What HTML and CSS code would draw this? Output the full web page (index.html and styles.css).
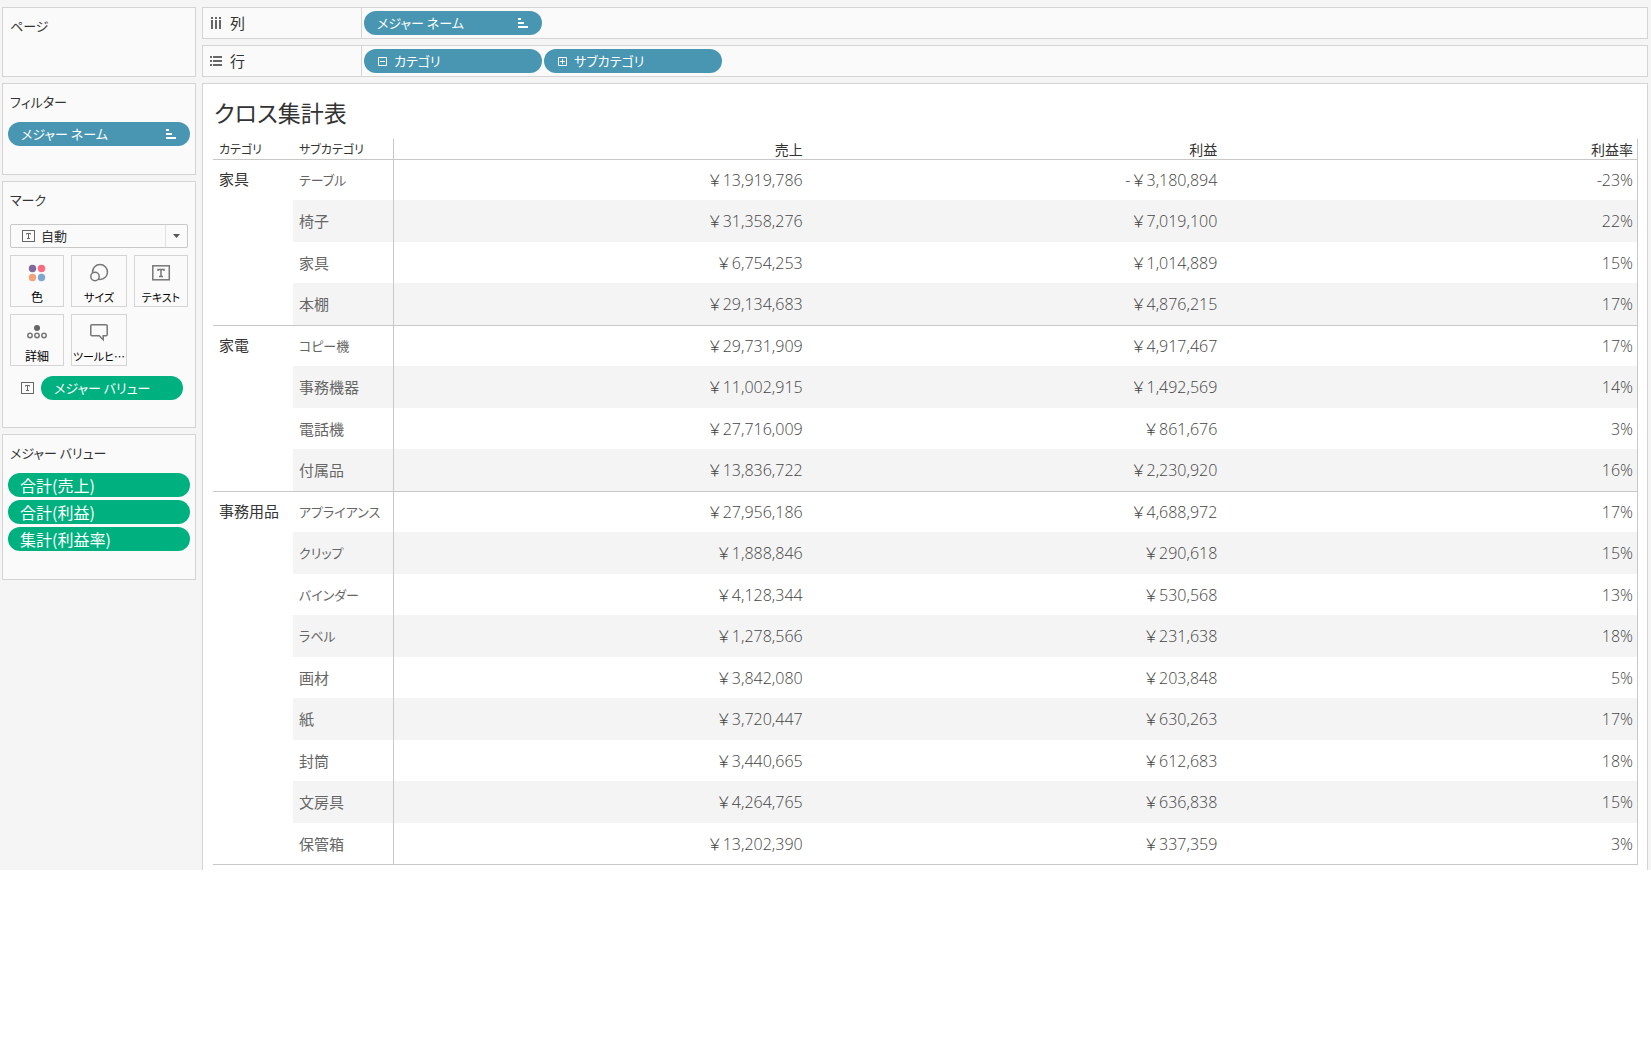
FILE: index.html
```html
<!DOCTYPE html>
<html lang="ja">
<head>
<meta charset="utf-8">
<meta name="viewport" content="width=device-width, initial-scale=1">
<title>クロス集計表</title>
<link rel="stylesheet" href="styles.css">
</head>
<body>
<div class="app">
  <aside class="sidebar">
    <section class="card card-pages">
      <h2 class="card-title">ページ</h2>
    </section>
    <section class="card card-filters">
      <h2 class="card-title">フィルター</h2>
      <button class="pill pill-dim" type="button">メジャー ネーム
        <svg class="sort-icon" width="10" height="10" viewBox="0 0 10 10"><path d="M0 0h3v2H0zM0 4h6v2H0zM0 8h10v2H0z"/></svg>
      </button>
    </section>
    <section class="card card-marks">
      <h2 class="card-title">マーク</h2>
      <div class="mark-type">
        <svg class="text-icon mark-type-icon" width="14" height="13" viewBox="0 0 14 13"><rect x=".5" y=".5" width="12" height="11"/><path d="M4.500 4.500v-1h4v1M6.500 3.500v5M5 8.500h3"/></svg>
        <select class="mark-select" aria-label="マークの種類"><option>自動</option></select>
        <svg class="mark-arrow" width="7" height="4" viewBox="0 0 7 4"><path d="M0 0h7L3.500 4z"/></svg>
      </div>
      <div class="mark-grid">
        <button class="mark-btn" type="button">
          <svg width="20" height="20" viewBox="0 0 20 20"><circle cx="5.500" cy="5.500" r="3.700" fill="#80699b"/><circle cx="14.500" cy="5.500" r="3.700" fill="#fb6a7f"/><circle cx="5.500" cy="14.500" r="3.700" fill="#f2a37a"/><circle cx="14.500" cy="14.500" r="3.700" fill="#80a5cf"/></svg>
          <span>色</span>
        </button>
        <button class="mark-btn" type="button">
          <svg class="line-icon" width="20" height="20" viewBox="0 0 20 20"><circle cx="11" cy="9" r="7.500"/><circle class="cover" cx="6" cy="13.500" r="4.200"/></svg>
          <span class="kana">サイズ</span>
        </button>
        <button class="mark-btn" type="button">
          <svg class="line-icon" width="20" height="20" viewBox="0 0 20 20"><rect x="1.800" y="2.800" width="16.500" height="14"/><path d="M7 8V6.500h6V8M10 6.500v7M8 13.500h4"/></svg>
          <span class="kana">テキスト</span>
        </button>
        <button class="mark-btn" type="button">
          <svg class="line-icon" width="20" height="20" viewBox="0 0 20 20"><circle class="solid" cx="10" cy="6" r="3"/><circle cx="3" cy="13.500" r="2.200"/><circle cx="10" cy="13.500" r="2.200"/><circle cx="17" cy="13.500" r="2.200"/></svg>
          <span>詳細</span>
        </button>
        <button class="mark-btn" type="button">
          <svg class="line-icon" width="20" height="20" viewBox="0 0 20 20"><path d="M3 2.800h14q1.200 0 1.200 1v9q0 1-1 1h-3v4l-4-4H3q-1.200 0-1.200-1v-9q0-1 1.200-1z"/></svg>
          <span class="kana">ツールヒ…</span>
        </button>
      </div>
      <div class="mark-field">
        <svg class="text-icon" width="14" height="13" viewBox="0 0 14 13"><rect x=".5" y=".5" width="12" height="11"/><path d="M4.500 4.500v-1h4v1M6.500 3.500v5M5 8.500h3"/></svg>
        <button class="pill pill-measure" type="button">メジャー バリュー</button>
      </div>
    </section>
    <section class="card card-values">
      <h2 class="card-title">メジャー バリュー</h2>
      <div class="pill-stack">
        <button class="pill pill-measure pill-calc" type="button">合計(売上)</button>
        <button class="pill pill-measure pill-calc" type="button">合計(利益)</button>
        <button class="pill pill-measure pill-calc" type="button">集計(利益率)</button>
      </div>
    </section>
  </aside>

  <main class="workspace">
    <section class="shelf">
      <h2 class="shelf-title">
        <svg width="12" height="12" viewBox="0 0 12 12"><path d="M1 0h2v2H1zM5 0h2v2H5zM9 0h2v2H9zM1 3h2v9H1zM5 3h2v9H5zM9 3h2v9H9z"/></svg>列
      </h2>
      <div class="shelf-pills">
        <button class="pill pill-dim" type="button">メジャー ネーム
          <svg class="sort-icon" width="10" height="10" viewBox="0 0 10 10"><path d="M0 0h3v2H0zM0 4h6v2H0zM0 8h10v2H0z"/></svg>
        </button>
      </div>
    </section>
    <section class="shelf">
      <h2 class="shelf-title">
        <svg width="12" height="12" viewBox="0 0 12 12"><path d="M0 1h2v2H0zM0 5h2v2H0zM0 9h2v2H0zM3 1h9v2H3zM3 5h9v2H3zM3 9h9v2H3z"/></svg>行
      </h2>
      <div class="shelf-pills">
        <button class="pill pill-dim" type="button"><svg class="box-icon" width="9" height="9" viewBox="0 0 9 9"><path d="M.5.5h8v8h-8zM2 4.500h5"/></svg>カテゴリ</button>
        <button class="pill pill-dim" type="button"><svg class="box-icon" width="9" height="9" viewBox="0 0 9 9"><path d="M.5.5h8v8h-8zM2 4.500h5M4.500 2v5"/></svg>サブカテゴリ</button>
      </div>
    </section>
    <section class="sheet">
      <h1 class="sheet-title">クロス集計表</h1>
      <table class="crosstab">
        <colgroup><col class="col-cat"><col class="col-sub"><col><col><col></colgroup>
        <thead>
          <tr><th class="kana" scope="col">カテゴリ</th><th class="sub kana" scope="col">サブカテゴリ</th><th class="num" scope="col">売上</th><th class="num" scope="col">利益</th><th class="num" scope="col">利益率</th></tr>
        </thead>
        <tbody>
          <tr><th class="cat" scope="rowgroup" rowspan="4">家具</th><th class="sub kana" scope="row">テーブル</th><td>￥13,919,786</td><td>-￥3,180,894</td><td>-23%</td></tr>
          <tr><th class="sub" scope="row">椅子</th><td>￥31,358,276</td><td>￥7,019,100</td><td>22%</td></tr>
          <tr><th class="sub" scope="row">家具</th><td>￥6,754,253</td><td>￥1,014,889</td><td>15%</td></tr>
          <tr><th class="sub" scope="row">本棚</th><td>￥29,134,683</td><td>￥4,876,215</td><td>17%</td></tr>
        </tbody>
        <tbody>
          <tr><th class="cat" scope="rowgroup" rowspan="4">家電</th><th class="sub kana" scope="row">コピー機</th><td>￥29,731,909</td><td>￥4,917,467</td><td>17%</td></tr>
          <tr><th class="sub" scope="row">事務機器</th><td>￥11,002,915</td><td>￥1,492,569</td><td>14%</td></tr>
          <tr><th class="sub" scope="row">電話機</th><td>￥27,716,009</td><td>￥861,676</td><td>3%</td></tr>
          <tr><th class="sub" scope="row">付属品</th><td>￥13,836,722</td><td>￥2,230,920</td><td>16%</td></tr>
        </tbody>
        <tbody>
          <tr><th class="cat" scope="rowgroup" rowspan="9">事務用品</th><th class="sub kana" scope="row">アプライアンス</th><td>￥27,956,186</td><td>￥4,688,972</td><td>17%</td></tr>
          <tr><th class="sub kana" scope="row">クリップ</th><td>￥1,888,846</td><td>￥290,618</td><td>15%</td></tr>
          <tr><th class="sub kana" scope="row">バインダー</th><td>￥4,128,344</td><td>￥530,568</td><td>13%</td></tr>
          <tr><th class="sub kana" scope="row">ラベル</th><td>￥1,278,566</td><td>￥231,638</td><td>18%</td></tr>
          <tr><th class="sub" scope="row">画材</th><td>￥3,842,080</td><td>￥203,848</td><td>5%</td></tr>
          <tr><th class="sub" scope="row">紙</th><td>￥3,720,447</td><td>￥630,263</td><td>17%</td></tr>
          <tr><th class="sub" scope="row">封筒</th><td>￥3,440,665</td><td>￥612,683</td><td>18%</td></tr>
          <tr><th class="sub" scope="row">文房具</th><td>￥4,264,765</td><td>￥636,838</td><td>15%</td></tr>
          <tr><th class="sub" scope="row">保管箱</th><td>￥13,202,390</td><td>￥337,359</td><td>3%</td></tr>
        </tbody>
      </table>
    </section>
  </main>
</div>
</body>
</html>
```
FILE: styles.css
```css
* { box-sizing: border-box; }

body {
  margin: 0;
  background: #fff;
  color: #333;
  font: 14px/20px "Noto Sans CJK JP", sans-serif;
  font-feature-settings: "palt";
}

h1, h2 { margin: 0; font-weight: 400; }

button, select {
  font: inherit;
  font-feature-settings: inherit;
  color: inherit;
}

svg { flex: none; display: block; }

.app {
  display: grid;
  grid-template-columns: 194px minmax(0, 1fr);
  gap: 6px;
  padding: 7px 3px 0 2px;
  background: #f5f5f5;
}

/* Left-hand cards */
.sidebar {
  display: flex;
  flex-direction: column;
  gap: 6px;
}

.card {
  padding: 8px 5px 0;
  border: 1px solid #d4d4d4;
  background: #fafafa;
}

.card-pages { min-height: 70px; }
.card-filters { min-height: 92px; }
.card-marks { min-height: 247px; }
.card-values { min-height: 146px; }

.card-title {
  padding-left: 2px;
  font-size: 13px;
  line-height: 20px;
}

.card .pill { width: 100%; }
.card-filters .pill { margin-top: 10px; }

.pill {
  display: flex;
  align-items: center;
  width: 178px;
  height: 24px;
  padding: 0 14px 0 13px;
  border: 0;
  border-radius: 12px;
  color: #fff;
  font-size: 13px;
  line-height: 24px;
  white-space: nowrap;
}

.pill-dim { background: #4996b2; }
.pill-measure { background: #00b180; }
.card .pill-calc { padding-left: 12px; font-size: 16px; }

.sort-icon { margin-left: auto; fill: #fff; }
.box-icon { margin: 0 7px 0 1px; fill: none; stroke: #fff; }

.pill-stack {
  display: grid;
  gap: 3px;
  margin-top: 10px;
}

/* Marks card */
.mark-type {
  display: grid;
  grid-template-columns: 20px 1fr 24px;
  align-items: center;
  margin: 14px 2px 7px;
}

.mark-type > * { grid-row: 1; }

.mark-select {
  grid-column: 1 / -1;
  appearance: none;
  width: 100%;
  height: 24px;
  padding: 0 0 0 30px;
  border: 1px solid #c8c8c8;
  border-radius: 2px;
  background: linear-gradient(90deg, transparent 154px, #e0e0e0 154px, #e0e0e0 155px, transparent 155px) #fafafa;
  font-size: 13px;
}

.mark-type-icon {
  grid-column: 1;
  z-index: 1;
  margin-left: 12px;
  pointer-events: none;
}

.mark-arrow {
  grid-column: 3;
  z-index: 1;
  justify-self: center;
  fill: #555;
  pointer-events: none;
}

.text-icon {
  fill: none;
  stroke: #666;
}

.mark-grid {
  display: grid;
  grid-template-columns: minmax(0, 54fr) minmax(0, 56fr) minmax(0, 54fr);
  gap: 7px;
  margin: 0 2px;
}

.mark-btn {
  display: flex;
  flex-direction: column;
  align-items: center;
  gap: 6px;
  height: 52px;
  padding: 7px 0 0;
  border: 1px solid #d4d4d4;
  background: #fafafa;
  color: #000;
  font-size: 12px;
  line-height: 16px;
  white-space: nowrap;
}

.mark-btn .kana { font-size: 11px; }

.line-icon {
  fill: none;
  stroke: #777;
  stroke-width: 1.5;
}

.line-icon .cover { fill: #fafafa; }
.line-icon .solid { fill: #666; stroke: none; }

.mark-field {
  display: flex;
  align-items: center;
  gap: 6px;
  margin: 10px 7px 0 13px;
}

/* Shelves */
.workspace {
  display: flex;
  flex-direction: column;
  gap: 6px;
}

.shelf {
  display: flex;
  height: 32px;
  border: 1px solid #d4d4d4;
  background: #fafafa;
}

.shelf-title {
  display: flex;
  align-items: center;
  gap: 8px;
  width: 159px;
  padding-left: 7px;
  border-right: 1px solid #d4d4d4;
  font-size: 15px;
}

.shelf-title svg { fill: #666; }

.shelf-pills {
  display: flex;
  align-items: center;
  gap: 2px;
  padding-left: 2px;
}

/* Worksheet */
.sheet {
  padding: 12px 9px 5px 10px;
  border: 1px solid #d4d4d4;
  border-bottom: 0;
  background: #fff;
}

.sheet-title {
  padding-left: 1px;
  font-size: 23px;
  line-height: 32px;
}

.crosstab {
  width: 100%;
  margin-top: 11px;
  border-spacing: 0;
  table-layout: fixed;
}

.col-cat { width: 80px; }
.col-sub { width: 101px; }

.crosstab th,
.crosstab td {
  padding: 0 6px;
  font-weight: 400;
  font-size: 15px;
  line-height: 20px;
  text-align: left;
  white-space: nowrap;
}

.crosstab tr > :last-child {
  padding-right: 4px;
  border-right: 1px solid #c8c8c8;
}

.crosstab thead th { height: 20px; font-size: 14px; }
.crosstab .sub { border-right: 1px solid #c8c8c8; }
.crosstab tbody .kana { font-size: 13px; }
.crosstab thead .kana { font-size: 12px; }
.crosstab thead .num { text-align: right; }

.crosstab tbody tr { height: 41px; }
.crosstab tbody tr:nth-child(even) { height: 42px; }
.crosstab tbody tr:nth-child(9) { height: 42px; }
.crosstab tbody tr:first-child > * { border-top: 1px solid #c8c8c8; }
.crosstab tbody:last-child tr:last-child > *,
.crosstab tbody:last-child .cat { border-bottom: 1px solid #c8c8c8; }

.crosstab tbody .sub { color: #666; }
.crosstab tbody tr:nth-child(even) > * { background: #f4f4f4; }

.crosstab .cat {
  padding-top: 9px;
  vertical-align: top;
}

.crosstab td {
  color: #444;
  font-family: "Open Sans", "Noto Sans CJK JP", sans-serif;
  font-size: 16px;
  font-weight: 300;
  font-feature-settings: normal;
  text-align: right;
}
```
